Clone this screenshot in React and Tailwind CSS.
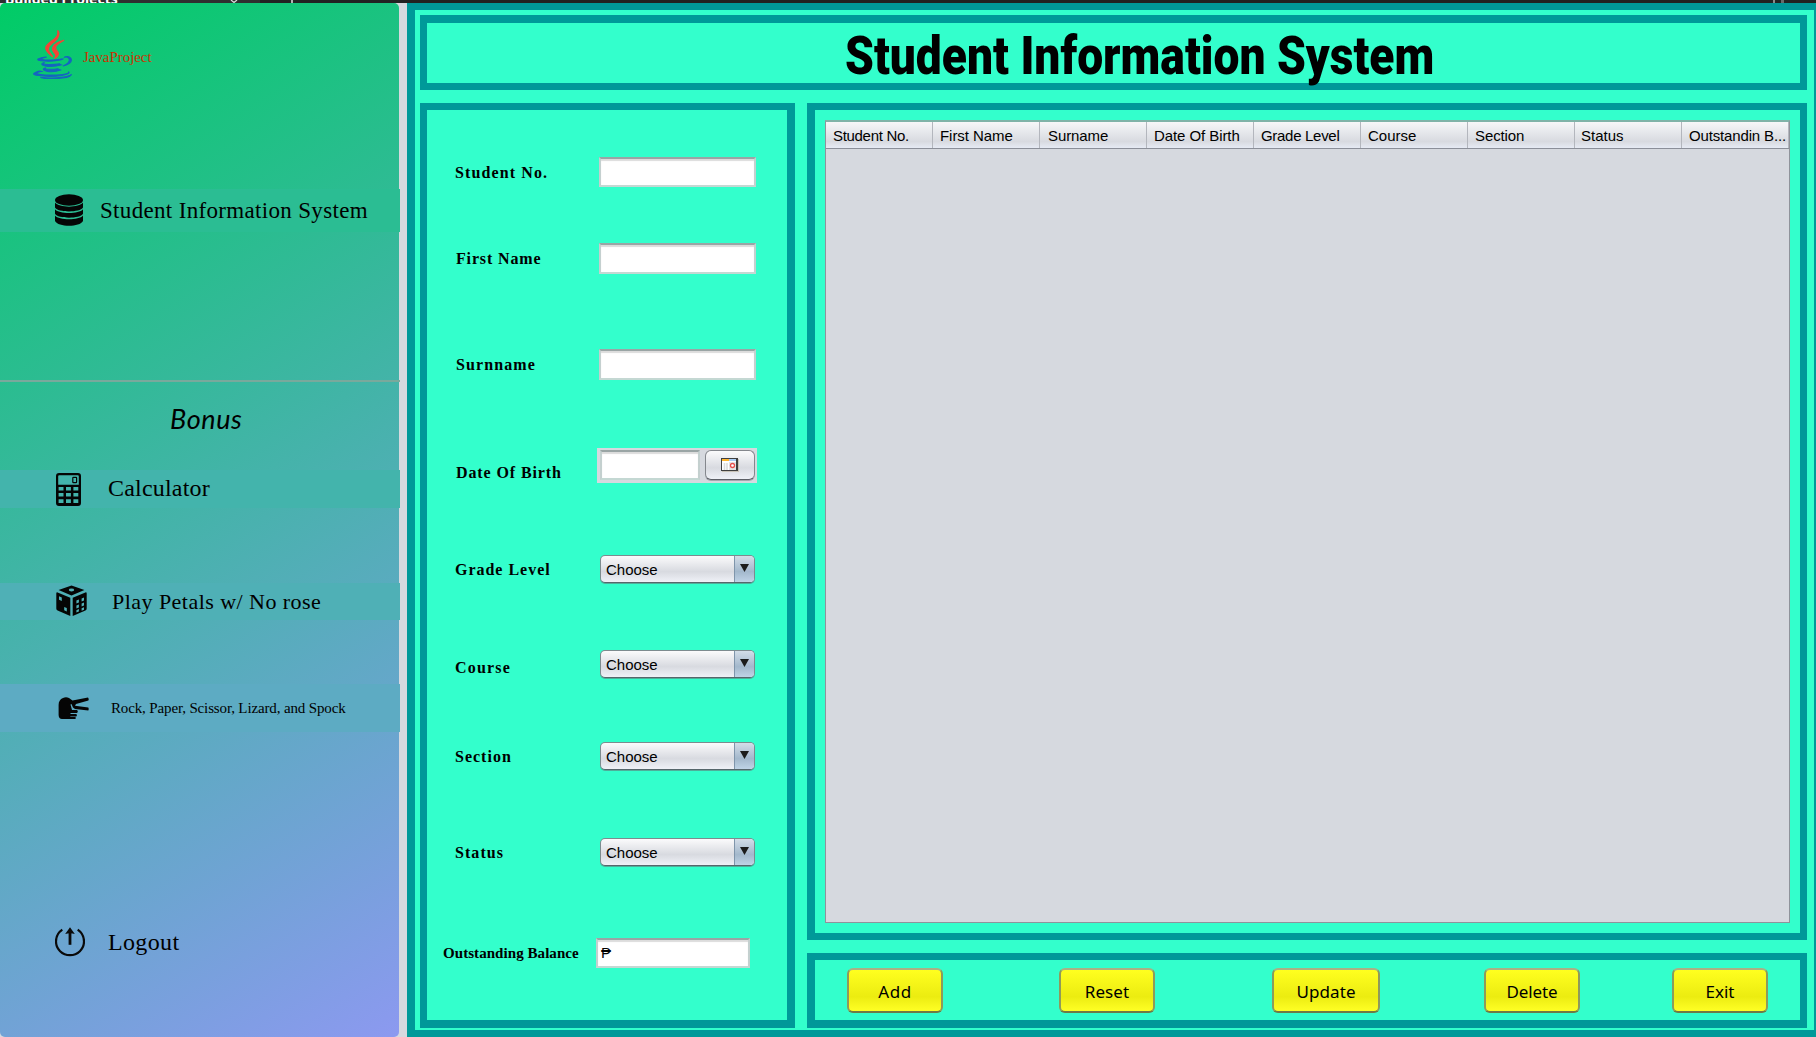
import React from "react";

const JavaLogo = () => (
  <svg viewBox="-3 -2 262 350" preserveAspectRatio="none" className="h-[49px] w-[39px]">
    <g fill="#1565c0" stroke="#1565c0" strokeWidth="7">
      <path d="M82.554 267.473s-13.198 7.675 9.393 10.272c27.369 3.122 41.356 2.675 71.517-3.034 0 0 7.93 4.972 19.003 9.279-67.611 28.977-153.019-1.679-99.913-16.517M74.292 229.659s-14.803 10.958 7.805 13.296c29.236 3.016 52.324 3.263 92.276-4.43 0 0 5.526 5.602 14.215 8.666-81.747 23.904-172.798 1.885-114.296-17.532" />
      <path d="M233.364 295.442s9.767 8.047-10.757 14.273c-39.026 11.823-162.432 15.393-196.714.471-12.323-5.36 10.787-12.8 18.056-14.362 7.581-1.644 11.914-1.337 11.914-1.337-13.705-9.655-88.583 18.957-38.034 27.15 137.853 22.356 251.292-10.066 215.535-26.195M88.9 190.48s-62.771 14.91-22.228 20.323c17.118 2.292 51.243 1.774 83.03-.89 25.978-2.19 52.063-6.85 52.063-6.85s-9.16 3.923-15.787 8.448c-63.744 16.765-186.886 8.966-151.435-8.183 29.981-14.492 54.358-12.848 54.358-12.848M201.506 253.422c64.8-33.672 34.839-66.03 13.927-61.67-5.126 1.066-7.411 1.99-7.411 1.99s1.903-2.98 5.537-4.27c41.37-14.545 73.187 42.897-13.355 65.647 0 .001 1.003-.895 1.302-1.697" />
      <path d="M95.268 344.665c62.199 3.982 157.712-2.209 159.974-31.64 0 0-4.348 11.158-51.404 20.018-53.088 9.99-118.564 8.824-157.387 2.421.001 0 7.947 6.58 48.817 9.201" />
    </g>
    <g fill="#f44336" stroke="#f44336" strokeWidth="8">
      <path d="M143.942 165.515c16.66 19.18-4.377 36.44-4.377 36.44s42.301-21.837 22.874-49.183c-18.144-25.5-32.059-38.172 43.268-81.858 0 0-118.238 29.53-61.765 94.6" />
      <path d="M162.439.371s35.887 35.9-34.037 91.101c-56.071 44.282-12.786 69.53-.023 98.377-32.73-29.53-56.75-55.526-40.635-79.72C111.395 74.612 176.918 57.393 162.439.37" />
    </g>
  </svg>
);

const DatabaseIcon = () => (
  <svg viewBox="0 0 28 32" className="h-8 w-7 shrink-0 -translate-y-px" fill="#050505">
    <ellipse cx="14" cy="6" rx="14" ry="5.8" />
    <path d="M0 8.600c4 5.400 24 5.400 28 0v5c-3 5.200-25 5.200-28 0z" />
    <path d="M0 15.200c4 5 24 5 28 0v4.600c-3 5.200-25 5.200-28 0z" />
    <path d="M0 21.600c4 5 24 5 28 0v5.400c-3 6.400-25 6.400-28 0z" />
  </svg>
);

const CalculatorIcon = () => (
  <svg viewBox="0 0 25 33" className="h-[33px] w-[25px] shrink-0">
    <path
      fill="#050505"
      fillRule="evenodd"
      d="M3 0h19a3 3 0 0 1 3 3v27a3 3 0 0 1-3 3H3a3 3 0 0 1-3-3V3a3 3 0 0 1 3-3zM3.200 2.200a1 1 0 0 0-1 1v8.600h20.600V3.200a1 1 0 0 0-1-1zM2.600 14v3.400h4.900v-3.400zm7.400 0v3.400h4.900v-3.400zm7.400 0v3.400h4.900v-3.400zM2.600 20v3.400h4.900v-3.400zm7.400 0v3.400h4.900v-3.400zm7.400 0v3.400h4.900v-3.400zM2.600 26.200v3.800h4.900v-3.800zm7.400 0v3.800h4.900v-3.800zm7.400 0v3.800h4.900v-3.800z"
    />
    <rect x="16.800" y="4.400" width="3.800" height="5.200" rx="0.600" fill="none" stroke="#050505" strokeWidth="1.200" />
  </svg>
);

const DiceIcon = () => (
  <svg viewBox="0 0 31 31" className="h-[31px] w-[31px] shrink-0 -translate-y-px">
    <path
      fill="#050505"
      fillRule="evenodd"
      d="M15.5.4 28.4 5 15.5 10.6 2.6 5zM12.8 5a2.7 1.4 0 1 0 5.4 0 2.7 1.4 0 1 0-5.4 0zM1.6 7.4l12.7 5.4V31L1.6 25.4Q.3 24.8.3 23.4V8.6Q.3 7 1.6 7.4zM3 11.3v3.4l2.8 1.2v-3.4zm5.2 10.6v3.4l2.6 1.2v-3.4zM29.4 7.4 16.7 12.8V31l12.700-5.600q1.300-.6 1.300-2V8.600q0-1.600-1.300-1.200zM20.400 15.600v3l2.500-1v-3zm5.200-2.100v3l2.400-1v-3zM20.400 20.600v3l2.500-1v-3zm5.200-2.200v3l2.400-1v-3zM20.400 25.200v2.400l2.500-1v-2.500zm5.200-2v2.500l2.400-1v-2.500z"
    />
  </svg>
);

const ScissorHandIcon = () => (
  <svg viewBox="0 0 31 22" className="h-[22px] w-[31px] shrink-0" fill="#050505">
    <path d="M5 1Q8-.3 11 1l3.500 2.500L30 .4q1.200 1.800.4 3L18 7l-1 1.800 13.300 1.800q.8 1.500 0 2.800L17 12l-2-1.500-1.500-3.500-1 .5 1.500 5.500h5q1.600 1.300 0 3h-6.500v1h5.800q1.300 1.500 0 2.400h-6V20h5q1 1 0 2H4Q.8 21.800.6 18V8Q.6 2.800 5 1z" />
  </svg>
);

const LogoutIcon = () => (
  <svg viewBox="0 0 30 30" className="h-[30px] w-[30px] shrink-0 -translate-y-px">
    <path d="M7.300 2.700C3.500 5.300 1 9.300 1 14.500a14 13.700 0 0 0 28 0c0-5.200-2.500-9.200-6.300-11.800" fill="none" stroke="#0a0a0a" strokeWidth="2.200" />
    <path d="M15 17.800V4" stroke="#0a0a0a" strokeWidth="2.800" />
    <path d="M10.200 7 15 .2l4.800 6.800q-4.800-1.400-9.600 0z" fill="#0a0a0a" />
  </svg>
);

const CalendarIcon = () => (
  <svg viewBox="0 0 18 14" className="h-[14px] w-[18px]">
    <rect x="1" y="1" width="17" height="13" fill="#c9c3b8" />
    <rect x="0" y="0" width="17" height="13" fill="#3f3f3f" />
    <rect x="1" y="1" width="7" height="2" fill="#ffb52e" />
    <rect x="8" y="1" width="7" height="2" fill="#a9cdf5" />
    <rect x="1" y="3" width="14" height="9" fill="#fff" />
    <path d="M3.500 5v7M6 5v7" stroke="#dcdcdc" strokeWidth="1.600" />
    <rect x="8" y="4" width="7" height="8" fill="#e4e4e4" />
    <circle cx="11.500" cy="7.500" r="2" fill="#fff" stroke="#e8504c" strokeWidth="1.300" />
  </svg>
);

const TextField = ({ className, children }) => (
  <div
    className={`flex items-center border-x-2 border-t-2 border-b-2 border-x-[#c4d0cf] border-t-[#9aa5a5] border-b-[#c4d8d3] bg-white shadow-[inset_0_2px_1px_#dcdcdc] ${className}`}
  >
    {children}
  </div>
);

const DateField = () => (
  <div className="-ml-[2px] flex h-[35px] w-40 bg-[#d6d9df] pl-[3px] pt-[2px]">
    <TextField className="h-[30px] w-[100px]" />
    <div className="ml-[5px] flex h-[30px] w-[50px] items-center justify-center rounded-md border border-[#84878d] border-b-[#5c5f66] bg-linear-to-b from-[#fbfbfc] via-[#d8dae0] via-60% to-[#eff1f7] shadow-[0_1px_0_#a4a7ad]">
      <CalendarIcon />
    </div>
  </div>
);

const ComboBox = () => (
  <div className="ml-px flex h-[28px] w-[155px] self-start overflow-hidden rounded-[5px] border border-[#7d8b8f] border-b-[#56666b] bg-linear-to-b from-[#fbfbfc] via-[#d8dae0] via-60% to-[#eff1f7] shadow-[0_1px_0_#4fae9a]">
    <span className="w-[133px] pl-[5px] pt-px font-['Liberation_Sans',Arial,sans-serif] text-[15px] font-normal leading-[26px] text-black">
      Choose
    </span>
    <span className="flex flex-1 justify-center border-l border-[#7f95ab] bg-linear-to-b from-[#d3dde8] via-[#a3b8cc] via-60% to-[#bfd3e6] pt-[8px]">
      <svg viewBox="0 0 9 8" className="h-2 w-[9px]">
        <path d="M0 0h9L4.500 8z" fill="#1c1c1c" />
      </svg>
    </span>
  </div>
);

const FIELDS = [
  { label: "Student No.", row: "mt-[47px] h-[30px]", text: "translate-y-px tracking-[1.11px]", kind: "text" },
  { label: "First Name", row: "mt-[56px] h-[31px]", text: "translate-x-px tracking-[0.85px]", kind: "text" },
  { label: "Surnname", row: "mt-[75px] h-[31px]", text: "translate-x-px tracking-[1.1px]", kind: "text" },
  { label: "Date Of Birth", row: "mt-[68px] h-[35px]", text: "translate-x-px translate-y-[7px] tracking-[0.89px]", kind: "date" },
  { label: "Grade Level", row: "mt-[72px] h-[29px]", text: "tracking-[0.98px]", kind: "combo" },
  { label: "Course", row: "mt-[66px] h-[29px]", text: "translate-y-[3px] tracking-[1.2px]", kind: "combo" },
  { label: "Section", row: "mt-[63px] h-[29px]", text: "tracking-[1px]", kind: "combo" },
  { label: "Status", row: "mt-[67px] h-[29px]", text: "tracking-[1.05px]", kind: "combo" },
];

const StudentForm = () => (
  <section className="h-[925px] w-[375px] border-y-[7px] border-b-8 border-l-[7px] border-r-8 border-[#009999] bg-[#33ffcc] font-['Liberation_Serif','Times_New_Roman',serif] font-bold text-black">
    {FIELDS.map(({ label, row, text, kind }) => (
      <div key={label} className={`flex items-center pl-7 ${row}`}>
        <span className={`w-36 shrink-0 whitespace-nowrap text-base leading-5 ${text}`}>{label}</span>
        {kind === "text" && <TextField className="h-full w-[157px]" />}
        {kind === "date" && <DateField />}
        {kind === "combo" && <ComboBox />}
      </div>
    ))}
    <div className="mt-[71px] flex h-[30px] items-center pl-4">
      <span className="w-[153px] shrink-0 whitespace-nowrap text-[15px] leading-5 tracking-[0.06px]">Outstanding Balance</span>
      <TextField className="h-full w-[154px] pl-[3px] font-['Liberation_Sans','DejaVu_Sans',sans-serif] text-[15px] font-normal">₱</TextField>
    </div>
  </section>
);

const COLUMNS = [
  ["Student No.", "tracking-[-0.31px]"],
  ["First Name", "tracking-[-0.05px]"],
  ["Surname", "translate-x-px tracking-[-0.09px]"],
  ["Date Of Birth", "tracking-[-0.08px]"],
  ["Grade Level", "tracking-[-0.3px]"],
  ["Course", ""],
  ["Section", "tracking-[-0.1px]"],
  ["Status", "-translate-x-px"],
  ["Outstandin B...", "tracking-[-0.15px]"],
];

const StudentTable = () => (
  <section className="h-[837px] border-y-[7px] border-l-8 border-r-[7px] border-[#009999] bg-[#33ffcc] px-[10px] pt-[10px]">
    <div className="h-[803px] w-[965px] border border-t-2 border-[#8f939b] border-t-[#7fb3a8] bg-[#d6d9df]">
      <div className="grid h-[27px] grid-cols-9 border-b border-[#8b8f99] bg-linear-to-b from-[#f6f7f9] via-[#d8dae0] via-75% to-[#e6eaf4]">
        {COLUMNS.map(([name, tracking]) => (
          <div key={name} className="border-r border-[#b3b6bd] pl-[7px] pt-px font-['Liberation_Sans',Arial,sans-serif] text-[15px] leading-[25px] text-black">
            <span className={`block whitespace-nowrap ${tracking}`}>{name}</span>
          </div>
        ))}
      </div>
    </div>
  </section>
);

const ACTIONS = [
  ["Add", "ml-[32px] w-[96px] tracking-[0.6px]"],
  ["Reset", "ml-[116px] w-[96px] tracking-[0.1px]"],
  ["Update", "ml-[117px] w-[108px] tracking-[0.1px]"],
  ["Delete", "ml-[104px] w-[96px] tracking-[-0.12px]"],
  ["Exit", "ml-[92px] w-[96px]"],
];

const ActionBar = () => (
  <section className="mt-[13px] flex h-[75px] border-b-8 border-l-8 border-r-[7px] border-t-[7px] border-[#009999] bg-[#33ffcc] pt-[8px]">
    {ACTIONS.map(([name, box]) => (
      <button
        key={name}
        className={`h-[45px] shrink-0 rounded-md border-2 border-[#8f9a5a] border-t-[#a9b184] border-b-[#6f7a45] bg-linear-to-b from-[#ffff1f] via-[#ecec10] via-65% to-[#ffff24] pt-px font-['Noto_Sans',sans-serif] text-[17px] leading-none text-black ${box}`}
      >
        {name}
      </button>
    ))}
  </section>
);

const Sidebar = () => (
  <aside className="h-full w-[400px] shrink-0 font-['Liberation_Serif','Times_New_Roman',serif] leading-none text-black">
    <div className="h-full w-[399px] rounded-[5px] bg-[linear-gradient(149deg,#00cc66,#8c99f0)] pt-[27px]">
      <div className="flex h-[49px] items-center pl-[33px] text-[15px] tracking-[-0.05px] text-[#cc3300]">
        <JavaLogo />
        <span className="ml-[11px] translate-y-[3px]">JavaProject</span>
      </div>
      <div className="mt-[110px] flex h-[43px] w-[400px] items-center bg-[#2bbd93] pl-[55px]">
        <DatabaseIcon />
        <span className="ml-[17px] whitespace-nowrap text-[23px] tracking-[0.33px]">Student Information System</span>
      </div>
      <hr className="mt-[148px] h-[2px] w-[400px] border-0 bg-[#79a99c]" />
      <div className="mt-[24px] h-[26px] pl-[170px] font-['Viner_Hand_ITC','Lato',cursive] text-[27px] italic leading-[26px] tracking-[0.6px]">
        Bonus
      </div>
      <div className="mt-[38px] flex h-[38px] w-[400px] items-center bg-[#43b4ac] pl-[56px]">
        <CalculatorIcon />
        <span className="ml-[27px] -translate-y-px text-2xl leading-none tracking-[0.2px]">Calculator</span>
      </div>
      <div className="mt-[75px] flex h-[37px] w-[400px] items-center bg-[#4fb0b6] pl-[56px]">
        <DiceIcon />
        <span className="ml-[25px] whitespace-nowrap text-[22px] tracking-[0.46px]">Play Petals w/ No rose</span>
      </div>
      <div className="mt-[64px] flex h-[48px] w-[400px] items-center bg-[#5dabc3] pl-[58px]">
        <ScissorHandIcon />
        <span className="ml-[22px] whitespace-nowrap text-[15px] tracking-[-0.14px]">Rock, Paper, Scissor, Lizard, and Spock</span>
      </div>
      <div className="mt-[195px] flex h-[31px] items-center pl-[55px]">
        <LogoutIcon />
        <span className="ml-[23px] -translate-y-px text-2xl leading-none tracking-[0.35px]">Logout</span>
      </div>
    </div>
  </aside>
);

export default function App() {
  return (
    <div className="flex h-[1037px] w-[1816px] flex-col overflow-hidden bg-[#d6d9df]">
      <div className="flex h-[3px] w-full shrink-0 overflow-hidden bg-[#222222]">
        <div className="flex h-[3px] w-[260px] items-end overflow-hidden bg-[#2f2f2f]">
          <span className="ml-[5px] w-[225px] translate-y-[4px] whitespace-nowrap font-['Noto_Sans',sans-serif] text-[14px] font-bold leading-[16px] text-white">
            Builded Projects
          </span>
          <svg viewBox="0 0 8 3" className="h-[3px] w-2 shrink-0">
            <path d="M1 0l3 2.500L7 0" fill="none" stroke="#ddd" strokeWidth="1.200" />
          </svg>
        </div>
        <span className="ml-[31px] h-[3px] w-[2px] bg-[#b5b5b5]" />
        <span className="ml-[1480px] h-[3px] w-[2px] bg-[#8a8a8a]" />
        <span className="ml-[6px] h-[3px] w-[3px] bg-[#6a6a6a]" />
      </div>
      <div className="flex h-[1034px] min-h-0">
        <Sidebar />
        <main className="ml-[7px] h-[1034px] w-[1409px] border-b-[7px] border-l-8 border-r-2 border-t-[7px] border-[#009999] bg-[#33ffcc] pl-[5px] pt-[5px]">
          <header className="flex h-[75px] w-[1387px] items-center border-b-[7px] border-l-[7px] border-r-[7px] border-t-8 border-[#009999] pl-[418px]">
            <h1 className="origin-left translate-y-[3px] scale-x-[0.855] whitespace-nowrap font-['Roboto',sans-serif] text-[54px] font-black leading-none text-black">
              Student Information System
            </h1>
          </header>
          <div className="mt-[13px] flex">
            <StudentForm />
            <div className="ml-3 w-[1000px]">
              <StudentTable />
              <ActionBar />
            </div>
          </div>
        </main>
      </div>
    </div>
  );
}
